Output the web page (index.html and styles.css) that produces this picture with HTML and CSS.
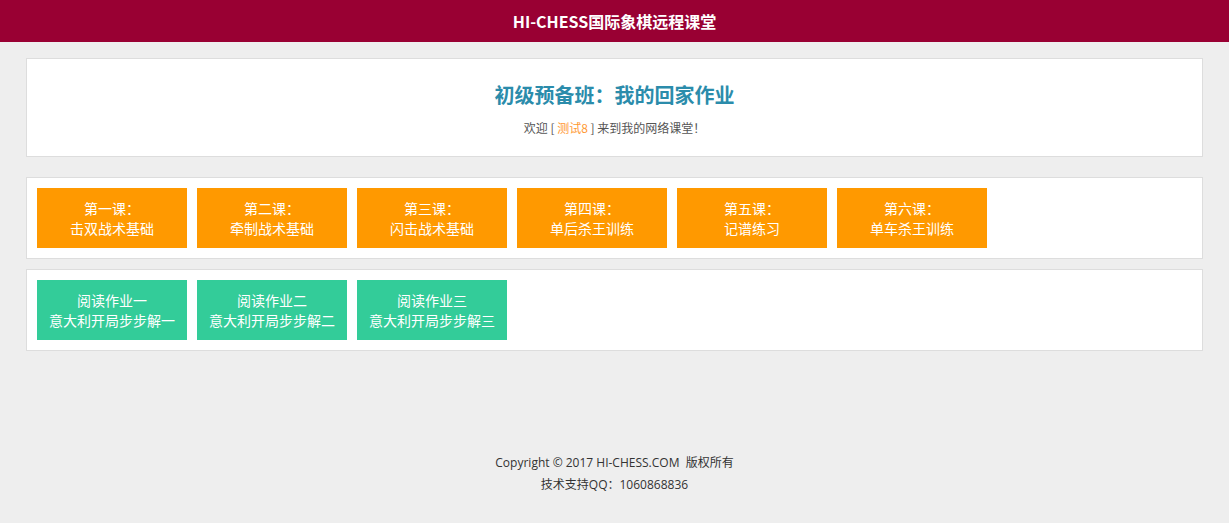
FILE: index.html
```html
<!DOCTYPE html>
<html lang="zh-CN">
<head>
    <meta charset="utf-8">
    <title>HI-CHESS国际象棋远程课堂</title>
    <link rel="stylesheet" href="styles.css">
</head>
<body>
<div class="header">HI-CHESS国际象棋远程课堂</div>

<div class="main">
    <div class="panel intro">
        <h2 class="title">初级预备班：我的回家作业</h2>
        <p class="welcome">欢迎 [ <span class="user">测试8</span> ] 来到我的网络课堂！</p>
    </div>

    <div class="panel lessons">
        <a class="tile orange" href="#">第一课：<br>击双战术基础</a>
        <a class="tile orange" href="#">第二课：<br>牵制战术基础</a>
        <a class="tile orange" href="#">第三课：<br>闪击战术基础</a>
        <a class="tile orange" href="#">第四课：<br>单后杀王训练</a>
        <a class="tile orange" href="#">第五课：<br>记谱练习</a>
        <a class="tile orange" href="#">第六课：<br>单车杀王训练</a>
    </div>

    <div class="panel reading">
        <a class="tile green" href="#">阅读作业一<br>意大利开局步步解一</a>
        <a class="tile green" href="#">阅读作业二<br>意大利开局步步解二</a>
        <a class="tile green" href="#">阅读作业三<br>意大利开局步步解三</a>
    </div>
</div>

<div class="footer">
    <p>Copyright &copy; 2017 HI-CHESS.COM &nbsp;版权所有</p>
    <p>技术支持QQ：1060868836</p>
</div>
</body>
</html>
```

FILE: styles.css
```css
body {
    margin: 0;
    background-color: #eeeeee;
    font-family: "Noto Sans CJK SC", "Noto Sans", sans-serif;
    color: #333;
}

.header {
    height: 42px;
    line-height: 42px;
    background-color: #990033;
    color: #fff;
    font-size: 16px;
    font-weight: bold;
    text-align: center;
}

.main {
    padding: 16px 26px 0;
}

.panel {
    background-color: #fff;
    border: 1px solid #dddddd;
}

.intro {
    padding: 21px 0 18px;
    text-align: center;
    margin-bottom: 20px;
}

.title {
    margin: 0;
    font-size: 20px;
    line-height: 30px;
    color: #2b8cab;
    font-weight: bold;
}

.welcome {
    margin: 8px 0 0;
    font-size: 12px;
    line-height: 20px;
    color: #555;
}

.user {
    color: #ff9933;
}

.lessons, .reading {
    display: flex;
    gap: 10px;
    padding: 10px;
}

.lessons {
    margin-bottom: 10px;
}

.tile {
    display: block;
    width: 150px;
    height: 40px;
    padding: 10px 0;
    font-size: 14px;
    line-height: 20px;
    color: #fff;
    text-align: center;
    text-decoration: none;
}

.orange {
    background-color: #ff9900;
}

.green {
    background-color: #33cc99;
}

.footer {
    margin-top: 101px;
    text-align: center;
    font-family: "Open Sans", "Noto Sans CJK SC", sans-serif;
    font-size: 12px;
    line-height: 22px;
    color: #333;
}

.footer p {
    margin: 0;
}
```
